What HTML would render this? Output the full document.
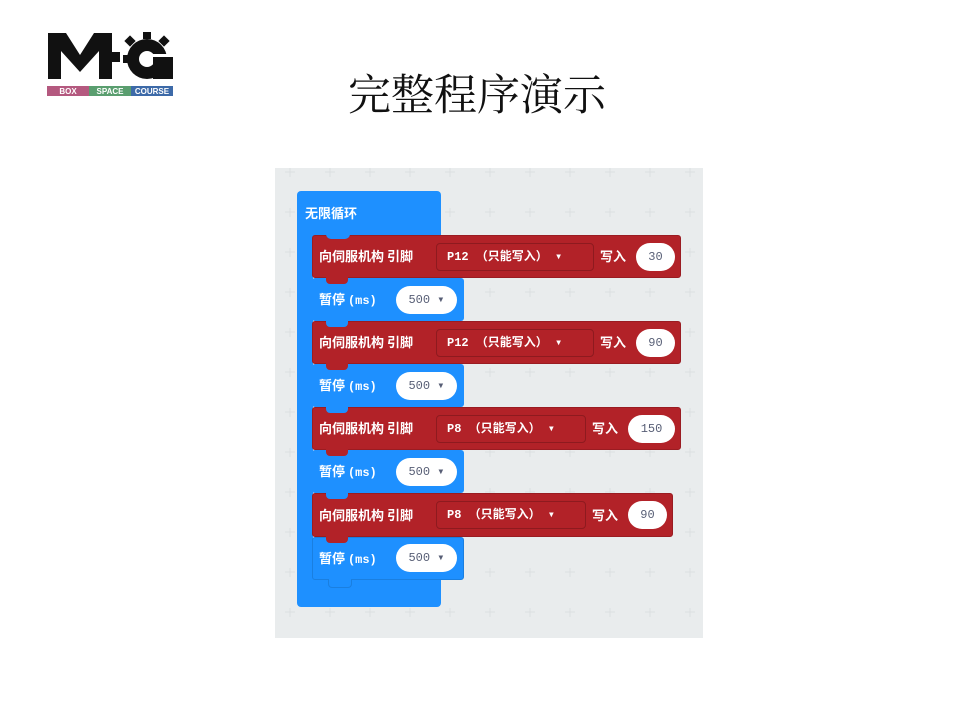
<!DOCTYPE html>
<html><head><meta charset="utf-8"><style>
body{margin:0;width:960px;height:720px;background:#fff;position:relative;overflow:hidden;font-family:"Liberation Sans","Noto Sans CJK SC",sans-serif}
.a{position:absolute}
.ws{left:275px;top:168px;width:428px;height:470px;background:#e9eced}
.blue{background:#1e90ff}
.red{background:#b22228;border-radius:3px;border:1px solid #9a1c22;box-sizing:border-box}
.t{color:#fff;font-weight:bold;font-size:13px;white-space:nowrap;line-height:16px;font-family:"Noto Sans CJK SC",sans-serif}
.m{font-family:"Liberation Mono",monospace;font-size:12px}
.dd{border:1px solid #8e1a1f;border-radius:4px;box-sizing:border-box;height:28px;color:#fff;font:bold 12px "Liberation Mono","Noto Sans CJK SC",monospace;line-height:26px;padding-left:10px;white-space:nowrap}
.ov{background:#fff;border-radius:14px;height:28px;color:#575e75;font:12px "Liberation Mono",monospace;line-height:28px;text-align:center}
.n{position:absolute;width:22px;height:7px;border-radius:0 0 4px 4px}
</style></head><body>
<div class="a" style="left:47px;top:30px">
<svg width="128" height="68" viewBox="0 0 128 68">
<path d="M1 3h18l14 22l14-22h18v46h-13v-28l-19 21l-19-21v28h-13z" fill="#111"/>
<rect x="61" y="22" width="12" height="10" fill="#111"/>
<circle cx="100" cy="29" r="20" fill="#111"/>
<circle cx="100" cy="29" r="8" fill="#fff"/>
<rect x="100" y="24" width="28" height="10" fill="#fff"/>
<rect x="106" y="27" width="20" height="22" fill="#111"/>
<rect x="96" y="2" width="8" height="7" fill="#111"/>
<rect x="113" y="7" width="8" height="8" fill="#111" transform="rotate(45 117 11)"/>
<rect x="79" y="7" width="8" height="8" fill="#111" transform="rotate(45 83 11)"/>
<rect x="76" y="25" width="6" height="8" fill="#111"/>
<rect x="0" y="56" width="42" height="10" fill="#b4597f"/>
<rect x="42" y="56" width="42" height="10" fill="#5a9e6f"/>
<rect x="84" y="56" width="42" height="10" fill="#3d6aa8"/>
<text x="21" y="64" font-size="8" font-weight="bold" fill="#fff" text-anchor="middle" font-family="Liberation Sans">BOX</text>
<text x="63" y="64" font-size="8" font-weight="bold" fill="#fff" text-anchor="middle" font-family="Liberation Sans">SPACE</text>
<text x="105" y="64" font-size="8" font-weight="bold" fill="#fff" text-anchor="middle" font-family="Liberation Sans">COURSE</text>
</svg></div>
<div class="a" style="left:348px;top:62px;font-size:43px;font-family:'Noto Serif CJK SC','Liberation Serif',serif;color:#111">完整程序演示</div>
<div class="a ws">
<svg width="428" height="470"><defs><pattern id="p" x="0" y="0" width="40" height="40" patternUnits="userSpaceOnUse"><path d="M10 4h10M15 -1v10" stroke="#dcdfe1" stroke-width="1"/></pattern></defs><rect width="428" height="470" fill="url(#p)"/></svg>
</div>
<div class="a blue" style="left:297px;top:191px;width:144px;height:46px;border-radius:4px 4px 0 0"></div>
<div class="a blue" style="left:297px;top:230px;width:16px;height:370px"></div>
<div class="a blue" style="left:297px;top:579px;width:144px;height:28px;border-radius:0 0 4px 4px"></div>
<div class="a t" style="left:305px;top:205px">无限循环</div>

<div class="a red" style="left:312px;top:235px;width:369px;height:43px"></div>
<div class="a blue" style="left:326px;top:234px;width:24px;height:5px;border-radius:0 0 5px 5px"></div>
<div class="a t" style="left:319px;top:248px">向伺服机构 引脚</div>
<div class="a dd" style="left:436px;top:243px;width:158px">P12 （只能写入） ▾</div>
<div class="a t" style="left:600px;top:248px">写入</div>
<div class="a ov" style="left:636px;top:243px;width:39px">30</div>

<div class="a blue" style="left:312px;top:278px;width:152px;height:43px;border-radius:3px"></div>
<div class="n" style="left:326px;top:277px;background:#b22228"></div>
<div class="a t" style="left:319px;top:291px">暂停 <span class="m">(ms)</span></div>
<div class="a ov" style="left:396px;top:286px;width:61px">500 ▾</div>

<div class="a red" style="left:312px;top:321px;width:369px;height:43px"></div>
<div class="n" style="left:326px;top:320px;background:#1e90ff"></div>
<div class="a t" style="left:319px;top:334px">向伺服机构 引脚</div>
<div class="a dd" style="left:436px;top:329px;width:158px">P12 （只能写入） ▾</div>
<div class="a t" style="left:600px;top:334px">写入</div>
<div class="a ov" style="left:636px;top:329px;width:39px">90</div>

<div class="a blue" style="left:312px;top:364px;width:152px;height:43px;border-radius:3px"></div>
<div class="n" style="left:326px;top:363px;background:#b22228"></div>
<div class="a t" style="left:319px;top:377px">暂停 <span class="m">(ms)</span></div>
<div class="a ov" style="left:396px;top:372px;width:61px">500 ▾</div>

<div class="a red" style="left:312px;top:407px;width:369px;height:43px"></div>
<div class="n" style="left:326px;top:406px;background:#1e90ff"></div>
<div class="a t" style="left:319px;top:420px">向伺服机构 引脚</div>
<div class="a dd" style="left:436px;top:415px;width:150px">P8 （只能写入） ▾</div>
<div class="a t" style="left:592px;top:420px">写入</div>
<div class="a ov" style="left:628px;top:415px;width:47px">150</div>

<div class="a blue" style="left:312px;top:450px;width:152px;height:43px;border-radius:3px"></div>
<div class="n" style="left:326px;top:449px;background:#b22228"></div>
<div class="a t" style="left:319px;top:463px">暂停 <span class="m">(ms)</span></div>
<div class="a ov" style="left:396px;top:458px;width:61px">500 ▾</div>

<div class="a red" style="left:312px;top:493px;width:361px;height:44px"></div>
<div class="n" style="left:326px;top:492px;background:#1e90ff"></div>
<div class="a t" style="left:319px;top:507px">向伺服机构 引脚</div>
<div class="a dd" style="left:436px;top:501px;width:150px">P8 （只能写入） ▾</div>
<div class="a t" style="left:592px;top:507px">写入</div>
<div class="a ov" style="left:628px;top:501px;width:39px">90</div>

<div class="a blue" style="left:312px;top:537px;width:152px;height:43px;border-radius:3px;border:1px solid #1a7fe0;box-sizing:border-box"></div>
<div class="n" style="left:326px;top:536px;background:#b22228"></div>
<div class="a t" style="left:319px;top:550px">暂停 <span class="m">(ms)</span></div>
<div class="a ov" style="left:396px;top:544px;width:61px">500 ▾</div>
<div class="a blue" style="left:328px;top:579px;width:22px;height:8px;border-radius:0 0 4px 4px;border:1px solid #1a7fe0;border-top:none"></div>
</body></html>
